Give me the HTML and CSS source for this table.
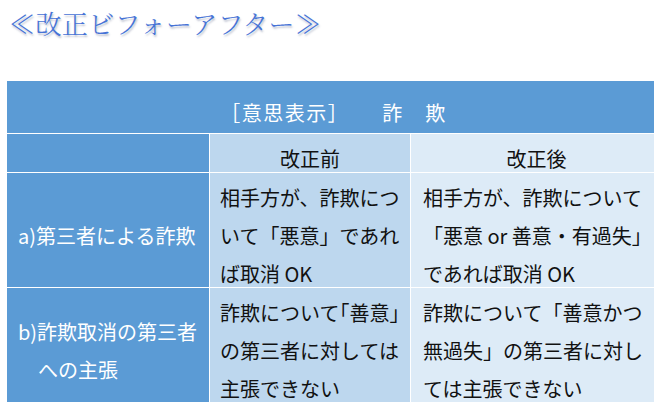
FILE: index.html
```html
<!DOCTYPE html>
<html lang="ja">
<head>
<meta charset="utf-8">
<title>改正ビフォーアフター</title>
<link rel="stylesheet" href="styles.css">
</head>
<body>
<main class="page">
  <h1 class="title">≪改正ビフォーアフター≫</h1>
  <div class="sheet">
    <div class="cell head span3"><div class="txt">［意思表示］　　詐　欺</div></div>
    <div class="cell label"></div>
    <div class="cell before center"><div class="txt">改正前</div></div>
    <div class="cell after center"><div class="txt">改正後</div></div>

    <div class="cell label"><div class="txt">a)第三者による詐欺</div></div>
    <div class="cell before"><div class="txt">相手方が、詐欺につ<br>いて「悪意」であれ<br>ば取消 OK</div></div>
    <div class="cell after"><div class="txt">相手方が、詐欺について<br>「悪意 or 善意・有過失」<br>であれば取消 OK</div></div>

    <div class="cell label"><div class="txt hang">b)詐欺取消の第三者<br>への主張</div></div>
    <div class="cell before"><div class="txt">詐欺について<span class="half">「</span>善意」<br>の第三者に対しては<br>主張できない</div></div>
    <div class="cell after"><div class="txt">詐欺について「善意かつ<br>無過失」の第三者に対し<br>ては主張できない</div></div>
  </div>
</main>
</body>
</html>
```
FILE: styles.css
```css
html, body {
  margin: 0;
  padding: 0;
  background: #ffffff;
}

.page {
  padding: 6px 0 0 0;
  font-family: "Noto Sans CJK JP", "Noto Sans", sans-serif;
}

.title {
  margin: 0 0 0 9px;
  font-family: "Noto Serif CJK JP", "Noto Sans CJK JP", serif;
  font-size: 26px;
  line-height: 34px;
  font-weight: 300;
  color: #4673d6;
  text-shadow: 1px 2px 2px rgba(70, 80, 120, 0.35);
  letter-spacing: 0.4px;
}

.sheet {
  display: grid;
  grid-template-columns: 202px 200px 243px;
  grid-template-rows: 52px 38px 114px 114px;
  gap: 1px;
  width: max-content;
  margin: 41px 0 0 7px;
  background: #ffffff;
}

.cell {
  display: flex;
  align-items: center;
  font-size: 20px;
  line-height: 38px;
  color: #111111;
  white-space: nowrap;
}

.txt {
  padding-top: 12px;
}

.span3 {
  grid-column: 1 / span 3;
}

.head {
  background: #5b9bd5;
  color: #ffffff;
  justify-content: center;
  padding-left: 6px;
  letter-spacing: 1.5px;
}

.label {
  background: #5b9bd5;
  color: #ffffff;
  padding-left: 11px;
}

.before {
  background: #bdd7ee;
  padding-left: 10px;
}

.after {
  background: #ddebf7;
  padding-left: 12px;
}

.center {
  justify-content: center;
  padding-left: 0;
}

.after.center {
  padding-left: 8px;
}

.hang {
  padding-left: 20px;
  text-indent: -20px;
}

.half {
  font-feature-settings: "halt";
}
```
